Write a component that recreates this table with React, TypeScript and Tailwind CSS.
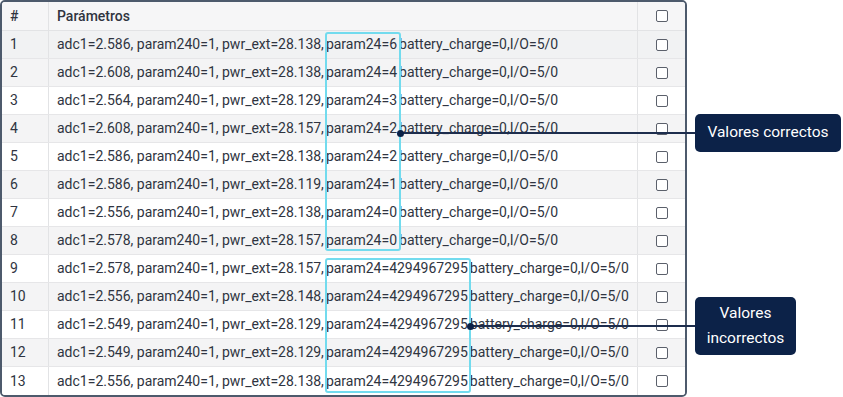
import React from "react";

const rows: { n: number; pre: string; p: string; ok: boolean }[] = [
  { n: 1, pre: "adc1=2.586, param240=1, pwr_ext=28.138, ", p: "param24=6", ok: true },
  { n: 2, pre: "adc1=2.608, param240=1, pwr_ext=28.138, ", p: "param24=4", ok: true },
  { n: 3, pre: "adc1=2.564, param240=1, pwr_ext=28.129, ", p: "param24=3", ok: true },
  { n: 4, pre: "adc1=2.608, param240=1, pwr_ext=28.157, ", p: "param24=2", ok: true },
  { n: 5, pre: "adc1=2.586, param240=1, pwr_ext=28.138, ", p: "param24=2", ok: true },
  { n: 6, pre: "adc1=2.586, param240=1, pwr_ext=28.119, ", p: "param24=1", ok: true },
  { n: 7, pre: "adc1=2.556, param240=1, pwr_ext=28.138, ", p: "param24=0", ok: true },
  { n: 8, pre: "adc1=2.578, param240=1, pwr_ext=28.157, ", p: "param24=0", ok: true },
  { n: 9, pre: "adc1=2.578, param240=1, pwr_ext=28.157, ", p: "param24=4294967295", ok: false },
  { n: 10, pre: "adc1=2.556, param240=1, pwr_ext=28.148, ", p: "param24=4294967295", ok: false },
  { n: 11, pre: "adc1=2.549, param240=1, pwr_ext=28.129, ", p: "param24=4294967295", ok: false },
  { n: 12, pre: "adc1=2.549, param240=1, pwr_ext=28.129, ", p: "param24=4294967295", ok: false },
  { n: 13, pre: "adc1=2.556, param240=1, pwr_ext=28.138, ", p: "param24=4294967295", ok: false },
];

function Box() {
  return <div className="w-[12px] h-[12px] rounded-[2px] border border-[#5b606b] bg-white" />;
}

export default function App() {
  return (
    <div className="relative w-[843px] h-[397px] bg-white font-['Roboto',sans-serif] text-[14px] text-[#2f3441] overflow-hidden">
      <div className="w-[687px] h-[397px] border-2 border-[#4d5a6c] rounded-[5px] overflow-hidden flex flex-col">
        <div className="grid grid-cols-[47px_589px_47px] h-[29px] bg-[#f6f6f7] border-b border-[#e2e3e5] font-medium text-[#30343f]">
          <div className="border-r border-[#e2e3e5] pl-2 flex items-center">#</div>
          <div className="border-r border-[#e2e3e5] pl-2 flex items-center">Parámetros</div>
          <div className="flex items-center justify-center">
            <Box />
          </div>
        </div>
        {rows.map((r) => (
          <div
            key={r.n}
            className={
              "grid grid-cols-[47px_589px_47px] h-[28px] border-b border-[#e6e6e8] last:border-b-0 " +
              (r.n === 1 ? "bg-[#f1f2f3]" : r.n % 2 === 0 ? "bg-[#f4f4f5]" : "bg-white")
            }
          >
            <div className="border-r border-[#e2e3e5] pl-2 flex items-center">{r.n}</div>
            <div className="border-r border-[#e2e3e5] pl-2 flex items-center whitespace-nowrap">
              <span>{r.pre}</span>
              <span className="px-[2px]">{r.p}</span>
              <span>battery_charge=0,I/O=5/0</span>
            </div>
            <div className="flex items-center justify-center">
              <Box />
            </div>
          </div>
        ))}
      </div>

      {/* highlight boxes */}
      <div className="absolute left-[325px] top-[32px] w-[76px] h-[219px] border-2 border-[#72dbee] rounded-[3px]" />
      <div className="absolute left-[325px] top-[258px] w-[146px] h-[135px] border-2 border-[#72dbee] rounded-[3px]" />

      {/* leader lines */}
      <div className="absolute left-[400px] top-[132px] w-[295px] h-[2px] bg-[#1d2d4d]" />
      <div className="absolute left-[397px] top-[130px] w-[7px] h-[7px] rounded-full bg-[#0c2248]" />
      <div className="absolute left-[470px] top-[325px] w-[225px] h-[2px] bg-[#1d2d4d]" />
      <div className="absolute left-[467px] top-[323px] w-[7px] h-[7px] rounded-full bg-[#0c2248]" />

      {/* callouts */}
      <div className="absolute left-[695px] top-[114px] w-[146px] h-[38px] rounded-[5px] bg-[#0c2248] text-white text-[15.5px] flex items-center justify-center">
        Valores correctos
      </div>
      <div className="absolute left-[695px] top-[297px] w-[101px] h-[58px] rounded-[5px] bg-[#0c2248] text-white text-[15.5px] leading-[25px] flex flex-col items-center justify-center text-center">
        <span>Valores</span>
        <span>incorrectos</span>
      </div>
    </div>
  );
}
